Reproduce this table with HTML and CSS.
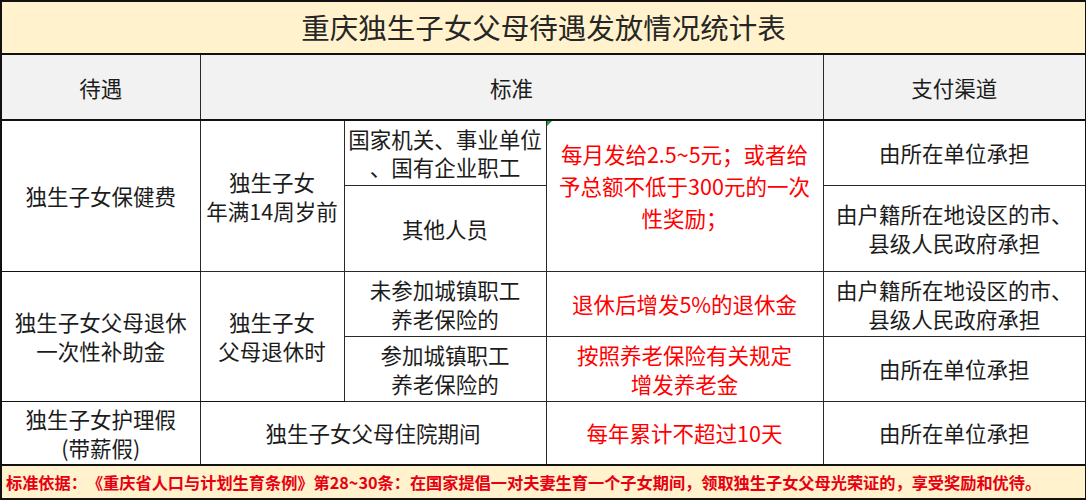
FILE: index.html
```html
<!DOCTYPE html>
<html lang="zh-CN">
<head>
<meta charset="utf-8">
<title>重庆独生子女父母待遇发放情况统计表</title>
<link rel="stylesheet" href="styles.css">
</head>
<body>
<table class="sheet">
  <colgroup>
    <col class="c1"><col class="c2"><col class="c3"><col class="c4"><col class="c5">
  </colgroup>
  <tr class="r-title"><td colspan="5" class="title">重庆独生子女父母待遇发放情况统计表</td></tr>
  <tr class="r-head">
    <td class="head">待遇</td>
    <td class="head" colspan="3">标准</td>
    <td class="head">支付渠道</td>
  </tr>
  <tr class="r1a">
    <td rowspan="2" class="grp">独生子女保健费</td>
    <td rowspan="2">独生子女<br>年满14周岁前</td>
    <td class="tight">国家机关、事业单位<br>、国有企业职工</td>
    <td rowspan="2" class="red red-tall"><span class="mark"></span>每月发给2.5~5元；或者给<br>予总额不低于300元的一次<br>性奖励；</td>
    <td>由所在单位承担</td>
  </tr>
  <tr class="r1b">
    <td>其他人员</td>
    <td>由户籍所在地设区的市、<br>县级人民政府承担</td>
  </tr>
  <tr class="r2a">
    <td rowspan="2" class="grp">独生子女父母退休<br>一次性补助金</td>
    <td rowspan="2" class="grp">独生子女<br>父母退休时</td>
    <td>未参加城镇职工<br>养老保险的</td>
    <td class="red">退休后增发5%的退休金</td>
    <td>由户籍所在地设区的市、<br>县级人民政府承担</td>
  </tr>
  <tr class="r2b">
    <td>参加城镇职工<br>养老保险的</td>
    <td class="red">按照养老保险有关规定<br>增发养老金</td>
    <td>由所在单位承担</td>
  </tr>
  <tr class="r3">
    <td class="grp">独生子女护理假<br>(带薪假)</td>
    <td colspan="2" class="grp">独生子女父母住院期间</td>
    <td class="red grp">每年累计不超过10天</td>
    <td class="grp">由所在单位承担</td>
  </tr>
  <tr class="r-foot"><td colspan="5" class="foot">标准依据：《重庆省人口与计划生育条例》第28~30条：在国家提倡一对夫妻生育一个子女期间，领取独生子女父母光荣证的，享受奖励和优待。</td></tr>
</table>
</body>
</html>
```

FILE: styles.css
```css
html, body {
  margin: 0;
  padding: 0;
  background: #ffffff;
}

.sheet {
  border-collapse: collapse;
  table-layout: fixed;
  width: 1085px;
  font-family: "Noto Sans CJK SC", "Noto Sans", sans-serif;
  font-size: 21.5px;
  color: #1c1c1c;
  border: 2px solid #111;
  text-spacing-trim: space-all;
}

.c1 { width: 199px; }
.c2 { width: 144px; }
.c3 { width: 202px; }
.c4 { width: 277px; }
.c5 { width: 263px; }

.sheet td {
  border: 1px solid #2a2a2a;
  padding: 0;
  text-align: center;
  vertical-align: middle;
  line-height: 29px;
  white-space: nowrap;
  background: #ffffff;
  text-spacing-trim: space-all;
}

.r-title { height: 53px; }
.r-head { height: 66px; }
.r1a { height: 65px; }
.r1b { height: 86px; }
.r2a { height: 65px; }
.r2b { height: 65px; }
.r3 { height: 64px; }
.r-foot { height: 34px; }

.sheet td.title {
  background: #fff2cc;
  font-size: 28.5px;
  color: #262626;
  border-bottom: 2px solid #111;
  padding-bottom: 2px;
}

.sheet td.head {
  background: #f2f2f2;
  border-bottom: 2px solid #111;
}

.sheet td.tight {
  line-height: 28px;
}

.sheet td.grp {
  border-bottom-color: #111;
}

.sheet td.red {
  color: #ff0000;
}

.sheet td.red-tall {
  position: relative;
  line-height: 32px;
  padding-bottom: 20px;
}

.mark {
  position: absolute;
  left: 0;
  top: 0;
  width: 0;
  height: 0;
  border-top: 5px solid #1e9b3c;
  border-right: 5px solid transparent;
}

.sheet td.foot {
  background: #fff2cc;
  color: #e60012;
  font-weight: bold;
  font-size: 16.2px;
  text-align: left;
  padding-left: 4px;
  border-top: 2px solid #111;
}
```
